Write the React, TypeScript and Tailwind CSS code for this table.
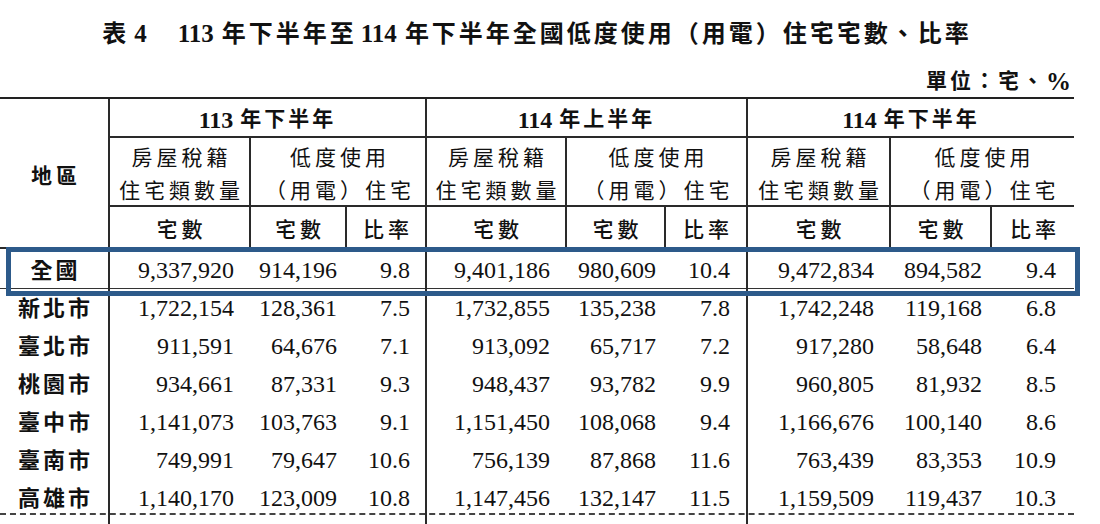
import React from "react";

const rows: string[][] = [
  ["新北市", "1,722,154", "128,361", "7.5", "1,732,855", "135,238", "7.8", "1,742,248", "119,168", "6.8"],
  ["臺北市", "911,591", "64,676", "7.1", "913,092", "65,717", "7.2", "917,280", "58,648", "6.4"],
  ["桃園市", "934,661", "87,331", "9.3", "948,437", "93,782", "9.9", "960,805", "81,932", "8.5"],
  ["臺中市", "1,141,073", "103,763", "9.1", "1,151,450", "108,068", "9.4", "1,166,676", "100,140", "8.6"],
  ["臺南市", "749,991", "79,647", "10.6", "756,139", "87,868", "11.6", "763,439", "83,353", "10.9"],
  ["高雄市", "1,140,170", "123,009", "10.8", "1,147,456", "132,147", "11.5", "1,159,509", "119,437", "10.3"],
];

const total = ["全國", "9,337,920", "914,196", "9.8", "9,401,186", "980,609", "10.4", "9,472,834", "894,582", "9.4"];

const numCls = [
  "",
  "pr-[17px]",
  "pr-[10px]",
  "pr-[15px] border-r-2 border-[#2a2a2a]",
  "pr-[17px]",
  "pr-[10px]",
  "pr-[16px] border-r-2 border-[#2a2a2a]",
  "pr-[17px]",
  "pr-[10px]",
  "pr-[18px]",
];

const COLS = "grid grid-cols-[110px_141px_96px_80px_140px_99px_82px_143px_101px_82px]";

function DataRow({ r, extra }: { r: string[]; extra: string }) {
  return (
    <div className={`${COLS} h-[38px]`}>
      <div className={`flex items-center justify-center pt-[3px] border-r-2 border-[#2a2a2a] font-bold text-[22px] tracking-[3px] pl-[3px] ${extra}`}>
        {r[0]}
      </div>
      {r.slice(1).map((v, i) => (
        <div
          key={i}
          className={`flex items-center justify-end pt-[3px] text-[24px] ${numCls[i + 1]} ${extra}`}
        >
          {v}
        </div>
      ))}
    </div>
  );
}

function GroupHead({ year, half, last }: { year: string; half: string; last?: boolean }) {
  return (
    <div
      className={`col-span-3 flex items-center justify-center pt-[4px] border-b-2 border-[#2a2a2a] font-bold ${last ? "" : "border-r-2"}`}
    >
      <span className="text-[24px]">{year}</span>
      <span className="text-[21px] tracking-[3px] pl-[7px]">{half}</span>
    </div>
  );
}

function SubHeads({ last }: { last?: boolean }) {
  return (
    <>
      <div className="flex flex-col items-center justify-center pt-[6px] border-r-2 border-b-2 border-[#2a2a2a] text-[21px] leading-[33px] tracking-[4px] pl-[4px]">
        <span>房屋稅籍</span>
        <span>住宅類數量</span>
      </div>
      <div
        className={`col-span-2 flex flex-col items-center justify-center pt-[6px] border-b-2 border-[#2a2a2a] text-[21px] leading-[33px] tracking-[4px] pl-[4px] ${last ? "" : "border-r-2"}`}
      >
        <span>低度使用</span>
        <span>（用電）住宅</span>
      </div>
    </>
  );
}

function UnitHeads({ last }: { last?: boolean }) {
  return (
    <>
      <div className="flex items-center justify-center pt-[8px] border-r-2 border-b-2 border-[#2a2a2a] text-[21px] tracking-[4px] pl-[4px] font-medium">
        宅數
      </div>
      <div className="flex items-center justify-center pt-[8px] border-r-2 border-b-2 border-[#2a2a2a] text-[21px] tracking-[4px] pl-[4px] font-medium">
        宅數
      </div>
      <div
        className={`flex items-center justify-center pt-[8px] border-b-2 border-[#2a2a2a] text-[21px] tracking-[4px] pl-[4px] font-medium ${last ? "" : "border-r-2"}`}
      >
        比率
      </div>
    </>
  );
}

export default function App() {
  return (
    <div className="w-[1100px] h-[524px] overflow-hidden bg-white text-[#111] font-['Liberation_Serif','Noto_Sans_CJK_TC',serif]">
      <div className="relative w-[1074px]">
        <div className="h-[66px] flex items-center justify-center pt-[1px] font-bold text-[24px] tracking-[3px] whitespace-pre">
          <span>表</span>
          <span className="text-[25px] pl-[5px]">4</span>
          <span className="pl-[28px] text-[25px] tracking-normal">113</span>
          <span className="pl-[8px]">年下半年至</span>
          <span className="pl-[4px] text-[25px] tracking-normal">114</span>
          <span className="pl-[8px]">年下半年全國低度使用（用電）住宅宅數、比率</span>
        </div>
        <div className="h-[31px] flex items-center justify-end pr-[3px] font-bold text-[21px] tracking-[3px]">
          單位：宅、<span className="text-[25px] tracking-normal">%</span>
        </div>

        <div className={`${COLS} grid-rows-[39px_69px_42px] border-t-2 border-[#222]`}>
          <div className="row-span-3 flex items-center justify-center pt-[8px] border-r-2 border-b-2 border-[#2a2a2a] font-bold text-[21px] tracking-[4px] pl-[4px]">
            地區
          </div>
          <GroupHead year="113" half="年下半年" />
          <GroupHead year="114" half="年上半年" />
          <GroupHead year="114" half="年下半年" last />
          <SubHeads />
          <SubHeads />
          <SubHeads last />
          <UnitHeads />
          <UnitHeads />
          <UnitHeads last />
        </div>

        <DataRow r={total} extra="border-b border-b-[#333]" />
        {rows.map((r) => (
          <DataRow key={r[0]} r={r} extra="" />
        ))}
        <div className="-mt-[2px] border-t-2 border-dashed border-[#444]" />
        <DataRow r={["", "", "", "", "", "", "", "", "", ""]} extra="" />

        <div className="absolute left-[6px] top-[247px] w-[1074px] h-[49px] border-[5px] border-[#2d5a8a]" />
      </div>
    </div>
  );
}
